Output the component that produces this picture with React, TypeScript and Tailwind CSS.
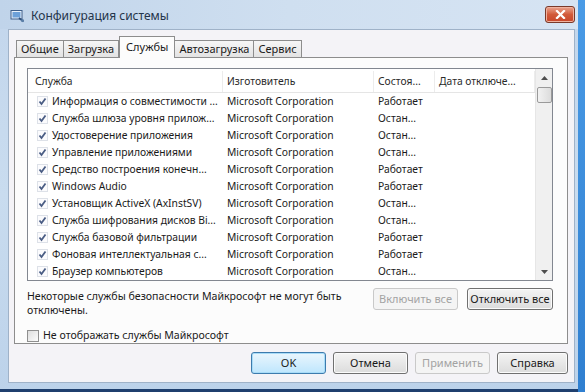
import React from "react";

const rows: [string, string][] = [
  ["Информация о совместимости ...", "Работает"],
  ["Служба шлюза уровня прилож...", "Остан..."],
  ["Удостоверение приложения", "Остан..."],
  ["Управление приложениями", "Остан..."],
  ["Средство построения конечн...", "Работает"],
  ["Windows Audio", "Работает"],
  ["Установщик ActiveX (AxInstSV)", "Остан..."],
  ["Служба шифрования дисков Bi...", "Остан..."],
  ["Служба базовой фильтрации", "Работает"],
  ["Фоновая интеллектуальная с...", "Работает"],
  ["Браузер компьютеров", "Остан..."],
];

function Check() {
  return (
    <svg width="11" height="11" viewBox="0 0 11 11" className="shrink-0">
      <rect x="0.5" y="0.5" width="10" height="10" fill="#fbfbfd" stroke="#dde1e8" />
      <path d="M2.5 5.5 L4.5 8 L8.5 2.5" fill="none" stroke="#4a5d84" strokeWidth="1.8" />
    </svg>
  );
}

function Btn({ children, variant = "normal", w = "w-[75px]" }: { children: React.ReactNode; variant?: "normal" | "disabled" | "default"; w?: string }) {
  const cls =
    variant === "disabled"
      ? "border-[#c9c9c9] bg-[#f4f4f4] text-[#a3a3a3]"
      : variant === "default"
      ? "border-[#3d7bad] bg-gradient-to-b from-[#eaf6fd] to-[#bee6fd] text-[#1a1a1a] shadow-[inset_0_0_0_1px_#a8dcf8]"
      : "border-[#707070] bg-gradient-to-b from-[#f4f4f4] to-[#dcdcdc] text-[#1a1a1a] shadow-[inset_0_0_0_1px_#fbfbfb]";
  return (
    <div className={`${w} h-[22px] rounded-[3px] border flex items-center justify-center text-[11px] ${cls}`}>
      {children}
    </div>
  );
}

export default function App() {
  return (
    <div
      className="w-[585px] h-[392px] flex overflow-hidden"
      style={{ fontFamily: '"Noto Sans", "Open Sans", sans-serif' }}
    >
      <div className="w-[578px] flex flex-col bg-gradient-to-b from-[#c3d6ec] via-[#c9dcef] to-[#bcd2ea]">
        {/* title bar */}
        <div className="h-[29px] flex items-center pt-[3px] pl-[10px] pr-[3px] bg-gradient-to-r from-[#c0d4ea] via-[#cfdff0] to-[#d6e4f3]">
          <svg width="15" height="14" viewBox="0 0 15 14" className="shrink-0">
            <rect x="1" y="1.5" width="11" height="8.5" fill="#e8f1fb" stroke="#3e5f8a" />
            <rect x="2.5" y="3" width="8" height="5.5" fill="#6da1d9" />
            <path d="M9 9 L13.5 12.5" stroke="#2d4f7c" strokeWidth="1.6" />
            <circle cx="12.5" cy="11.5" r="1.5" fill="#5b7fa8" />
          </svg>
          <span className="ml-[6px] text-[12px] text-[#24344a]">Конфигурация системы</span>
          <div className="flex-1" />
          <div className="w-[30px] h-[17px] mt-[-4px] rounded-[3px] border border-[#7a3a2a] bg-gradient-to-b from-[#e9a48f] via-[#d15a3a] to-[#c8462a] flex items-center justify-center shadow-[inset_0_0_0_1px_#f0b3a0]">
            <svg width="11" height="9" viewBox="0 0 11 9">
              <path d="M2 1 L9 8 M9 1 L2 8" stroke="#ffffff" strokeWidth="2.2" strokeLinecap="square" />
            </svg>
          </div>
        </div>
        {/* client */}
        <div className="flex-1 ml-[8px] mr-[3px] mb-[6px] bg-[#f4f3f7] border border-[#9fb2c8] flex flex-col pl-[5px] pr-[6px] pt-[5px]">
          {/* tabs */}
          <div className="flex items-end h-[22px] pl-[2px] text-[11px] text-[#1a1a1a]">
            <div className="h-[17px] px-[4px] border border-b-0 border-[#8d8d8d] bg-gradient-to-b from-[#f6f6f6] to-[#e3e3e3] flex items-center">Общие</div>
            <div className="h-[17px] px-[4px] border border-b-0 border-l-0 border-[#8d8d8d] bg-gradient-to-b from-[#f6f6f6] to-[#e3e3e3] flex items-center">Загрузка</div>
            <div className="h-[22px] px-[6px] border border-b-0 border-[#8d8d8d] bg-[#fcfcfc] flex items-center relative top-[1px] z-10">Службы</div>
            <div className="h-[17px] px-[4px] border border-b-0 border-l-0 border-[#8d8d8d] bg-gradient-to-b from-[#f6f6f6] to-[#e3e3e3] flex items-center">Автозагрузка</div>
            <div className="h-[17px] px-[4px] border border-b-0 border-l-0 border-[#8d8d8d] bg-gradient-to-b from-[#f6f6f6] to-[#e3e3e3] flex items-center">Сервис</div>
          </div>
          {/* panel */}
          <div className="h-[287px] border border-[#8d8d8d] bg-[#fcfcfc] pl-[12px] pr-[14px] pt-[10px] flex flex-col">
            {/* list */}
            <div className="h-[213px] border border-[#828790] bg-white flex text-[10.3px] text-[#1a1a1a]">
              <div className="flex-1 flex flex-col">
                <div className="h-[24px] pt-[2px] flex items-center border-b border-[#e5e5e5] text-[#2a2a2a]">
                  <div className="w-[195px] pl-[7px] h-full flex items-center border-r border-[#ececec]">Служба</div>
                  <div className="w-[151px] pl-[4px] h-full flex items-center border-r border-[#ececec]">Изготовитель</div>
                  <div className="w-[61px] pl-[4px] h-full flex items-center border-r border-[#ececec]">Состоя...</div>
                  <div className="w-[100px] pl-[4px] h-full flex items-center border-r border-[#ececec]">Дата отключе...</div>
                </div>
                {rows.map(([name, status]) => (
                  <div key={name} className="h-[17px] flex items-center">
                    <div className="w-[195px] pl-[9px] flex items-center gap-[4px] overflow-hidden">
                      <Check />
                      <span className="whitespace-nowrap">{name}</span>
                    </div>
                    <div className="w-[151px] pl-[4px] whitespace-nowrap">Microsoft Corporation</div>
                    <div className="w-[61px] pl-[4px] whitespace-nowrap">{status}</div>
                  </div>
                ))}
              </div>
              {/* scrollbar */}
              <div className="w-[17px] bg-[#f0f0f0] border-l border-[#e6e6e6] flex flex-col items-center">
                <div className="h-[17px] w-full flex items-center justify-center">
                  <svg width="7" height="4" viewBox="0 0 7 4"><path d="M0 4 L3.5 0 L7 4 Z" fill="#4d4d4d" /></svg>
                </div>
                <div className="h-[16px] w-[15px] mt-[1px] rounded-[2px] border border-[#9a9a9a] bg-gradient-to-r from-[#f2f2f2] to-[#dcdcdc]" />
                <div className="flex-1" />
                <div className="h-[17px] w-full flex items-center justify-center">
                  <svg width="7" height="4" viewBox="0 0 7 4"><path d="M0 0 L3.5 4 L7 0 Z" fill="#4d4d4d" /></svg>
                </div>
              </div>
            </div>
            {/* below list */}
            <div className="flex mt-[7px] text-[10.6px] text-[#1a1a1a]">
              <div className="flex-1 leading-[14px] pt-[1px]">
                Некоторые службы безопасности Майкрософт не могут быть
                <br />
                отключены.
              </div>
              <div className="flex gap-[9px]">
                <Btn variant="disabled" w="w-[85px]">Включить все</Btn>
                <Btn w="w-[86px]">Отключить все</Btn>
              </div>
            </div>
            <div className="flex items-center mt-[11px] text-[10.6px] text-[#1a1a1a]">
              <div className="w-[12px] h-[12px] border border-[#8f8f8f] bg-gradient-to-br from-[#dedede] to-[#fbfbfb]" />
              <span className="ml-[4px]">Не отображать службы Майкрософт</span>
            </div>
          </div>
          {/* bottom buttons */}
          <div className="flex justify-end gap-[7px] mt-[8px]">
            <Btn variant="default">OK</Btn>
            <Btn>Отмена</Btn>
            <Btn variant="disabled">Применить</Btn>
            <Btn w="w-[71px]">Справка</Btn>
          </div>
        </div>
        <div className="h-[3px] bg-[#1f3f6e]" />
      </div>
      <div className="flex-1 bg-gradient-to-b from-[#4a9be6] to-[#2f7fd0]" />
    </div>
  );
}
